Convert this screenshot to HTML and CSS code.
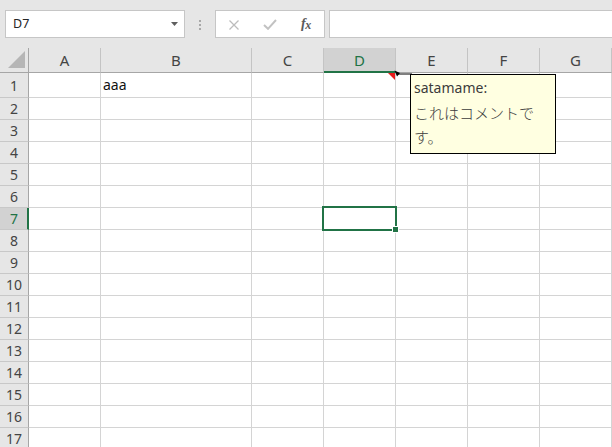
FILE: index.html
```html
<!DOCTYPE html>
<html lang="ja">
<head>
<meta charset="utf-8">
<title>Excel</title>
<link rel="stylesheet" href="styles.css">
</head>
<body>
<div class="toolbar">
  <div class="namebox">
    <span class="nb-text">D7</span>
    <svg class="dd" width="7" height="4" viewBox="0 0 7 4"><path d="M0 0H7L3.5 4Z" fill="#5f5f5f"/></svg>
  </div>
  <div class="grip"><i></i><i></i><i></i></div>
  <div class="fxbtns">
    <svg class="ic-x" width="12" height="10" viewBox="0 0 12 10"><path d="M1.5 0.5L10.5 9.5M10.5 0.5L1.5 9.5" stroke="#bcbcbc" stroke-width="1.3" fill="none"/></svg>
    <svg class="ic-ok" width="14" height="11" viewBox="0 0 14 11"><path d="M1 6L5 9.8L13 1" stroke="#c2c2c2" stroke-width="2" fill="none"/></svg>
    <span class="fx">f<span class="fx-x">x</span></span>
  </div>
  <div class="formula"></div>
</div>

<div class="sheet">
  <div class="corner"><svg width="29" height="25" viewBox="0 0 29 25"><path d="M8 20H25V3Z" fill="#b6b6b6"/></svg></div>
  <div class="ch">A</div><div class="ch">B</div><div class="ch">C</div><div class="ch sel">D</div><div class="ch">E</div><div class="ch">F</div><div class="ch">G</div>

  <div class="rh">1</div><div class="c"></div><div class="c txt">aaa</div><div class="c"></div><div class="c note"><svg class="red" width="7" height="7" viewBox="0 0 7 7"><path d="M0 0H7V7Z" fill="#e81b1b"/></svg></div><div class="c"></div><div class="c"></div><div class="c"></div>
  <div class="rh">2</div><div class="c"></div><div class="c"></div><div class="c"></div><div class="c"></div><div class="c"></div><div class="c"></div><div class="c"></div>
  <div class="rh">3</div><div class="c"></div><div class="c"></div><div class="c"></div><div class="c"></div><div class="c"></div><div class="c"></div><div class="c"></div>
  <div class="rh">4</div><div class="c"></div><div class="c"></div><div class="c"></div><div class="c"></div><div class="c"></div><div class="c"></div><div class="c"></div>
  <div class="rh">5</div><div class="c"></div><div class="c"></div><div class="c"></div><div class="c"></div><div class="c"></div><div class="c"></div><div class="c"></div>
  <div class="rh">6</div><div class="c"></div><div class="c"></div><div class="c"></div><div class="c"></div><div class="c"></div><div class="c"></div><div class="c"></div>
  <div class="rh sel">7</div><div class="c"></div><div class="c"></div><div class="c"></div><div class="c"></div><div class="c"></div><div class="c"></div><div class="c"></div>
  <div class="rh">8</div><div class="c"></div><div class="c"></div><div class="c"></div><div class="c"></div><div class="c"></div><div class="c"></div><div class="c"></div>
  <div class="rh">9</div><div class="c"></div><div class="c"></div><div class="c"></div><div class="c"></div><div class="c"></div><div class="c"></div><div class="c"></div>
  <div class="rh">10</div><div class="c"></div><div class="c"></div><div class="c"></div><div class="c"></div><div class="c"></div><div class="c"></div><div class="c"></div>
  <div class="rh">11</div><div class="c"></div><div class="c"></div><div class="c"></div><div class="c"></div><div class="c"></div><div class="c"></div><div class="c"></div>
  <div class="rh">12</div><div class="c"></div><div class="c"></div><div class="c"></div><div class="c"></div><div class="c"></div><div class="c"></div><div class="c"></div>
  <div class="rh">13</div><div class="c"></div><div class="c"></div><div class="c"></div><div class="c"></div><div class="c"></div><div class="c"></div><div class="c"></div>
  <div class="rh">14</div><div class="c"></div><div class="c"></div><div class="c"></div><div class="c"></div><div class="c"></div><div class="c"></div><div class="c"></div>
  <div class="rh">15</div><div class="c"></div><div class="c"></div><div class="c"></div><div class="c"></div><div class="c"></div><div class="c"></div><div class="c"></div>
  <div class="rh">16</div><div class="c"></div><div class="c"></div><div class="c"></div><div class="c"></div><div class="c"></div><div class="c"></div><div class="c"></div>
  <div class="rh">17</div><div class="c"></div><div class="c"></div><div class="c"></div><div class="c"></div><div class="c"></div><div class="c"></div><div class="c"></div>

  <div class="selection"></div>
  <div class="handle"></div>

  <svg class="connector" width="18" height="8" viewBox="0 0 18 8"><path d="M3 4H18" stroke="#000" stroke-width="1"/><path d="M0.5 0.5L6 3L3 6.5Z" fill="#000"/></svg>
  <div class="comment"><span class="author">satamame:</span><br>これはコメントです。</div>
</div>
</body>
</html>
```

FILE: styles.css
```css
html, body {
  margin: 0;
  padding: 0;
}

body {
  width: 612px;
  height: 447px;
  overflow: hidden;
  background: #e6e6e6;
  font-family: "Noto Sans", "Noto Sans CJK JP", sans-serif;
  color: #222;
}

/* ---------- formula bar ---------- */
.toolbar {
  display: flex;
  align-items: flex-start;
  height: 48px;
  box-sizing: border-box;
  padding: 10px 0 0 5px;
}

.namebox {
  width: 180px;
  height: 28px;
  box-sizing: border-box;
  border: 1px solid #c6c6c6;
  background: #fff;
  display: flex;
  align-items: center;
  justify-content: space-between;
  padding: 0 6px 0 7px;
}

.nb-text {
  font-size: 12.5px;
  color: #262626;
  line-height: 1;
}

.dd {
  display: block;
}

.grip {
  width: 30px;
  display: flex;
  flex-direction: column;
  align-items: center;
  gap: 2px;
  padding-top: 10px;
}

.grip i {
  display: block;
  width: 2px;
  height: 2px;
  background: #a8a8a8;
}

.fxbtns {
  width: 110px;
  height: 28px;
  box-sizing: border-box;
  border: 1px solid #c6c6c6;
  background: #fff;
  display: flex;
  align-items: center;
  padding-left: 12px;
}

.ic-x {
  display: block;
  margin-top: 1px;
}

.ic-ok {
  display: block;
  margin-left: 23px;
  margin-top: 1px;
}

.fx {
  margin-left: 24px;
  font-family: "Liberation Serif", "DejaVu Serif", serif;
  font-style: italic;
  font-weight: bold;
  font-size: 14px;
  color: #5a5a5a;
  line-height: 1;
  letter-spacing: -0.5px;
}

.fx-x {
  font-size: 12px;
  position: relative;
  top: 1px;
}

.formula {
  flex: 1;
  margin-left: 4px;
  margin-right: -4px;
  height: 28px;
  box-sizing: border-box;
  border: 1px solid #c6c6c6;
  background: #fff;
}

/* ---------- sheet ---------- */
.sheet {
  position: relative;
  display: grid;
  grid-template-columns: 29px 72px 151px 72px 72px 72px 72px 72px;
  grid-template-rows: 25px 25px repeat(17, 22px);
  background: #fff;
}

.sheet > div {
  box-sizing: border-box;
}

.corner {
  background: #e6e6e6;
  border-right: 1px solid #a6a6a6;
  border-bottom: 1px solid #a6a6a6;
}

.corner svg {
  display: block;
}

.ch {
  background: #e6e6e6;
  border-right: 1px solid #c4c4c4;
  border-bottom: 1px solid #a6a6a6;
  display: flex;
  align-items: center;
  justify-content: center;
  font-size: 15px;
  line-height: 24px;
  color: #444;
}

.ch.sel {
  background: #d2d2d2;
  color: #217346;
  border-bottom: 2px solid #217346;
}

.rh {
  background: #e6e6e6;
  border-right: 1px solid #a6a6a6;
  border-bottom: 1px solid #c8c8c8;
  display: flex;
  align-items: center;
  justify-content: center;
  font-size: 14px;
  color: #444;
}

.rh.sel {
  background: #d2d2d2;
  color: #217346;
  border-right: 2px solid #217346;
  padding-left: 1px;
}

.c {
  border-right: 1px solid #d4d4d4;
  border-bottom: 1px solid #d4d4d4;
}

.txt {
  display: flex;
  align-items: flex-end;
  padding: 0 0 2px 2px;
  font-size: 14px;
  line-height: 20px;
  color: #111;
}

.note {
  position: relative;
}

.red {
  position: absolute;
  top: 0;
  right: 0;
  display: block;
}

/* ---------- overlays ---------- */
.selection {
  position: absolute;
  left: 322px;
  top: 158px;
  width: 75px;
  height: 25px;
  box-sizing: border-box;
  border: 2px solid #217346;
}

.handle {
  position: absolute;
  left: 392px;
  top: 178px;
  width: 7px;
  height: 7px;
  box-sizing: border-box;
  border: 1px solid #fff;
  background: #217346;
}

.connector {
  position: absolute;
  left: 394px;
  top: 22px;
  display: block;
}

.comment {
  position: absolute;
  left: 410px;
  top: 26px;
  width: 146px;
  height: 80px;
  box-sizing: border-box;
  border: 1px solid #000;
  background: #ffffe1;
  padding: 0 3px 0 3px;
  font-family: "Noto Sans", "Noto Sans CJK JP", sans-serif;
  font-size: 15px;
  font-weight: 300;
  line-height: 24.5px;
  color: #3c3c3c;
}

.author {
  font-size: 14px;
  font-weight: 400;
}
```
